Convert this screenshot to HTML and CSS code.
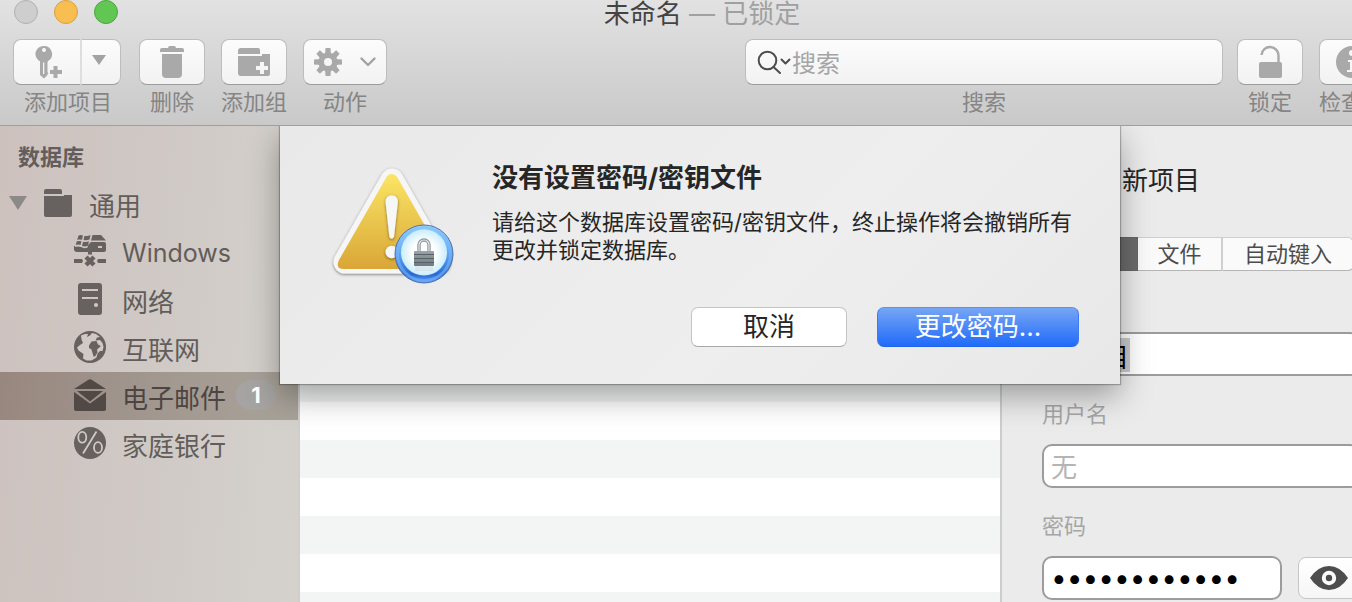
FILE: index.html
```html
<!DOCTYPE html>
<html lang="zh-CN">
<head>
<meta charset="utf-8">
<title>未命名 — 已锁定</title>
<link rel="stylesheet" href="styles.css">
</head>
<body>
<div class="window">
  <header class="header">
    <div class="titlebar">
      <div class="lights">
        <button class="light light-off" type="button"></button>
        <button class="light light-min" type="button"></button>
        <button class="light light-max" type="button"></button>
      </div>
      <h1 class="title">未命名 <span class="title-state">— 已锁定</span></h1>
    </div>
    <div class="toolbar">
      <div class="tool">
        <div class="tool-split">
          <button class="tool-button split-main" type="button" aria-labelledby="t-add">
            <svg width="28" height="34" viewBox="0 0 28 34" fill="#a9a9a9">
              <path fill-rule="evenodd" d="M9 1a8 8 0 0 1 4.400 14.700L12.500 17v10.200l1 .8-1 1.200v.8L9 33.500 5 30V16.200A8 8 0 0 1 9 1Zm0 2a2 2 0 1 0 0 4 2 2 0 0 0 0-4ZM8 17.500V29h1.300V17.500Z"/>
              <path d="M18.500 21h4v4h4.500v4h-4.500v4h-4v-4H15v-4h3.500Z"/>
            </svg>
          </button>
          <button class="tool-button split-menu" type="button" aria-labelledby="t-add">
            <svg width="14" height="10" viewBox="0 0 14 10" fill="#a2a2a2"><path d="M0 0h14L7 10Z"/></svg>
          </button>
        </div>
        <span class="tool-label" id="t-add">添加项目</span>
      </div>
      <div class="tool">
        <button class="tool-button" type="button" aria-labelledby="t-del">
          <svg width="24" height="34" viewBox="0 0 24 34" fill="#a9a9a9">
            <path d="M0 7V5q0-2 2-2h6q0-2 2-2h4q2 0 2 2h6q2 0 2 2v2ZM2 9h20v20q0 4-4 4H6q-4 0-4-4Z"/>
          </svg>
        </button>
        <span class="tool-label" id="t-del">删除</span>
      </div>
      <div class="tool">
        <button class="tool-button" type="button" aria-labelledby="t-group">
          <svg width="32" height="28" viewBox="0 0 32 28" fill="#a9a9a9">
            <path d="M0 6V3q0-3 3-3h17q2 0 2 2v4Z"/>
            <path fill-rule="evenodd" d="M0 8h24V6h8v20q0 2-2 2H3q-3 0-3-3Zm22 6v4h-4v4h4v4h4v-4h4v-4h-4v-4Z"/>
          </svg>
        </button>
        <span class="tool-label" id="t-group">添加组</span>
      </div>
      <div class="tool">
        <button class="tool-button tool-action" type="button" aria-labelledby="t-action">
          <svg width="28" height="28" viewBox="-14 -14 28 28" fill="#a9a9a9">
            <path d="M-2.500-14h5L3-7h-6ZM-2.500 14h5L3 7h-6ZM-14-2.500v5L-7 3v-6ZM14-2.500v5L7 3v-6Z"/>
            <path transform="rotate(45)" d="M-2.500-14h5L3-7h-6ZM-2.500 14h5L3 7h-6ZM-14-2.500v5L-7 3v-6ZM14-2.500v5L7 3v-6Z"/>
            <circle r="6.800" fill="none" stroke="#a9a9a9" stroke-width="5.600"/>
          </svg>
          <svg width="16" height="10" viewBox="0 0 16 10" fill="none" stroke="#a2a2a2" stroke-width="2.400" stroke-linecap="round" stroke-linejoin="round"><path d="M1.500 1.500l6.500 6.500 6.500-6.500"/></svg>
        </button>
        <span class="tool-label" id="t-action">动作</span>
      </div>
      <div class="tool tool-search">
        <div class="search-box">
          <svg width="34" height="24" viewBox="0 0 34 24" fill="none" stroke="#4d4d4d" stroke-width="2" stroke-linecap="round" stroke-linejoin="round">
            <circle cx="10.500" cy="10.500" r="8.800"/><path d="M16.500 17l6.500 6"/><path d="M24.500 9.500l4 4 4-4"/>
          </svg>
          <input class="search-input" id="search" type="text" placeholder="搜索">
        </div>
        <label class="tool-label" for="search">搜索</label>
      </div>
      <div class="tool">
        <button class="tool-button" type="button" aria-labelledby="t-lock">
          <svg width="24" height="34" viewBox="0 0 24 34" fill="#a9a9a9">
            <path d="M3.500 10a8 8 0 0 1 17 1v8" fill="none" stroke="#a9a9a9" stroke-width="2.400"/>
            <rect x="1" y="17" width="23" height="16" rx="2"/>
          </svg>
        </button>
        <span class="tool-label" id="t-lock">锁定</span>
      </div>
      <div class="tool">
        <button class="tool-button" type="button" aria-labelledby="t-info">
          <svg width="32" height="32" viewBox="0 0 32 32">
            <circle cx="16" cy="16" r="16" fill="#a9a9a9"/>
            <circle cx="16" cy="7" r="3" fill="#f7f7f7"/>
            <path d="M12 14h7v10h2v2H11v-2h3v-8h-2Z" fill="#f7f7f7"/>
          </svg>
        </button>
        <span class="tool-label" id="t-info">检查器</span>
      </div>
    </div>
  </header>

  <main class="content">
    <nav class="sidebar">
      <h2 class="side-title">数据库</h2>
      <a class="side-row side-root" href="#">
        <svg width="18" height="14" viewBox="0 0 18 14" fill="#8b8a88"><path d="M0 0h18L9 14Z"/></svg>
        <svg class="root-icon" width="28" height="28" viewBox="0 0 28 28" fill="#67625f"><path d="M0 5V2q0-2 2-2h14q2 0 2 2v3ZM0 7h20V6h8v20q0 2-2 2H2q-2 0-2-2Z"/></svg>
        <span>通用</span>
      </a>
      <a class="side-row" href="#">
        <svg width="32" height="32" viewBox="0 0 32 32" fill="#67625f">
          <path d="M18.500 0H27l5 5.500H17ZM0 11h13l4-4h13q2 0 2 2v6q0 2-2 2H18v2.500h-4V17H3q-3 0-3-3Zm24 0v2h4v-2Z" fill-rule="evenodd"/>
          <path d="M4 0h13l-3.500 12.500q-3 1.500-6.500-.5-3-1-6 0Z" fill="#d0c9c6"/>
          <path d="M4.500.5q2-.8 4.500 0L8 4.800q-2.500-.8-4.800 0ZM10.500.8q3 .8 6-.8L15.500 4.600q-3 1.200-6 .5ZM2.800 6.300q2.200-.8 4.700 0L6.500 10q-2.500-.8-4.800 0ZM9 6.700q3 .8 6-.5L14 10.700q-3 1.300-6 .3Z"/>
          <path d="M0 24h8l1 2-1 2H0ZM32 24h-8l-1 2 1 2h8Z"/>
          <path d="M12 22l8 8M20 22l-8 8" fill="none" stroke="#67625f" stroke-width="4.400"/>
        </svg>
        <span class="latin">Windows</span>
      </a>
      <a class="side-row" href="#">
        <svg width="32" height="32" viewBox="0 0 32 32" fill="#67625f">
          <path fill-rule="evenodd" d="M7 0h18q3 0 3 3v26q0 3-3 3H7q-3 0-3-3V3q0-3 3-3Zm1 6v2h16V6Zm0 8v2h16v-2Z"/>
          <circle cx="22" cy="22" r="2" fill="#d0c9c6"/>
        </svg>
        <span>网络</span>
      </a>
      <a class="side-row" href="#">
        <svg width="32" height="32" viewBox="0 0 32 32">
          <circle cx="16" cy="16" r="16" fill="#67625f"/>
          <path fill="#d0c9c6" d="M7 4.500l4-1.500 3 0-1 3 3-1.500 2-2.500 4 1 4 3-3 .5-1.500 3 4.500-.5 2.500 3 1 4-1 4-2.500 0-2.500 2.500-1 4-5 3h-5l-3.500-2 .5-4.500-5-3.500-1.500-3 3-2.500 3-2-1.500-3.500Z"/>
          <path fill="#67625f" d="M15 14.500l2.500-4 5-.5 1.500 3.500 3 1.500-4 3.500.5 3-2.500 4h-1.500l-2-7-2.500-1.500Z"/>
        </svg>
        <span>互联网</span>
      </a>
      <a class="side-row side-selected" href="#" aria-current="page">
        <svg width="32" height="32" viewBox="0 0 32 32" fill="#514945">
          <path d="M14 1q2-1.500 4 0l14 9H0ZM3 12h26l-13 10.500ZM0 13l16 11.500L32 13v17q0 2-2 2H2q-2 0-2-2Z"/>
        </svg>
        <span>电子邮件</span>
        <span class="badge">1</span>
      </a>
      <a class="side-row" href="#">
        <svg width="32" height="32" viewBox="0 0 32 32">
          <circle cx="16" cy="16" r="16" fill="#67625f"/>
          <g fill="none" stroke="#d0c9c6" stroke-width="1.800">
            <path d="M22.500 4.500L9 26.500"/>
            <ellipse cx="8.300" cy="10.300" rx="4" ry="5.400"/>
            <ellipse cx="24" cy="20.500" rx="4" ry="5.400"/>
          </g>
        </svg>
        <span>家庭银行</span>
      </a>
    </nav>

    <section class="list">
      <div class="list-head"></div>
      <div class="list-rows"></div>
    </section>

    <section class="detail">
      <h2 class="detail-title">新项目</h2>
      <div class="tabs">
        <button class="tab tab-on" type="button"></button>
        <button class="tab" type="button">文件</button>
        <button class="tab tab-wide" type="button">自动键入</button>
      </div>
      <div class="fields">
        <input class="field field-title" type="text" value="新项目">
        <label class="field-label" for="user">用户名</label>
        <input class="field" id="user" type="text" placeholder="无">
        <label class="field-label" for="pass">密码</label>
        <div class="pass-row">
          <input class="field field-pass" id="pass" type="password" value="abcdefghijkl">
          <button class="eye" type="button">
            <svg width="38" height="24" viewBox="0 0 38 24"><path d="M0 12Q8 0 19 0t19 12Q30 24 19 24T0 12Z" fill="#4d4d4d"/><circle cx="19" cy="12" r="5.200" fill="#4d4d4d" stroke="#fbfbfb" stroke-width="4"/></svg>
          </button>
        </div>
      </div>
    </section>

    <div class="dialog" role="alertdialog" aria-labelledby="d-title" aria-describedby="d-text">
      <svg class="alert-icon" width="126" height="122" viewBox="0 0 126 122">
        <defs>
          <linearGradient id="gold" x1="0" y1="0" x2="0" y2="1"><stop offset="0" stop-color="#fbe565"/><stop offset="1" stop-color="#d9a637"/></linearGradient>
          <linearGradient id="ring" x1="0" y1="0" x2="0" y2="1"><stop offset="0" stop-color="#a9dcfb"/><stop offset=".5" stop-color="#5da5f5"/><stop offset=".85" stop-color="#2a68d4"/><stop offset="1" stop-color="#5f9dfa"/></linearGradient>
          <radialGradient id="glass"><stop offset=".5" stop-color="#fff"/><stop offset="1" stop-color="#c9edfc"/></radialGradient>
          <linearGradient id="steel" x1="0" y1="0" x2="0" y2="1"><stop offset="0" stop-color="#9aa4a9"/><stop offset="1" stop-color="#6d797f"/></linearGradient>
          <filter id="drop" x="-20%" y="-20%" width="140%" height="140%"><feDropShadow dx="0" dy="1" stdDeviation="1.500" flood-opacity=".5"/></filter>
        </defs>
        <path d="M62 16L109 98H15Z" fill="#f6f6f6" stroke="#f6f6f6" stroke-width="23" stroke-linejoin="round" filter="url(#drop)"/>
        <path d="M61.700 10q3.500 0 6 4l47 82q4 9-5 9H14q-9 0-5-9L56 14q2-4 5.700-4Z" fill="url(#gold)"/>
        <g fill="#f7f7f7" filter="url(#drop)">
          <path d="M55.500 37.500a6.200 6.200 0 0 1 12.400 0L64 73q-2.300 3.500-4.600 0Z"/>
          <circle cx="61.700" cy="88" r="6.200"/>
        </g>
        <circle cx="94" cy="90" r="29" fill="url(#ring)" stroke="#4a6fa8" stroke-width="1"/>
        <circle cx="94" cy="90" r="26.500" fill="none" stroke="#78b8fa" stroke-width="3" opacity=".6"/>
        <circle cx="94" cy="88.500" r="23" fill="url(#glass)"/>
        <path d="M89 87v-6a5 5 0 0 1 10 0v6" fill="none" stroke="#8d9599" stroke-width="3.400"/>
        <path d="M89 87v-6a5 5 0 0 1 10 0v6" fill="none" stroke="#e4e7e8" stroke-width="1.200"/>
        <rect x="84" y="87" width="20" height="15" rx="1" fill="url(#steel)"/>
        <path d="M84 90.500h20M84 94.500h20M84 98.500h20" stroke="#566167" stroke-width="1"/>
        <path d="M85 102h18v5H85Z" fill="#b8c4ca" opacity=".3"/>
      </svg>
      <div class="dialog-body">
        <h2 class="dialog-title" id="d-title">没有设置密码/密钥文件</h2>
        <p class="dialog-text" id="d-text">请给这个数据库设置密码/密钥文件，终止操作将会撤销所有更改并锁定数据库。</p>
        <div class="dialog-actions">
          <button class="push" type="button">取消</button>
          <button class="push push-default" type="button">更改密码...</button>
        </div>
      </div>
    </div>
  </main>
</div>
</body>
</html>
```

FILE: styles.css
```css
* { box-sizing: border-box; }

body {
  margin: 0;
  overflow: hidden;
  font-family: Inter, "Noto Sans CJK SC", sans-serif;
  font-size: 26px;
  color: #262626;
}

button, input { font: inherit; color: inherit; margin: 0; }
button { padding: 0; border: 0; }
h1, h2, p { margin: 0; }
svg { display: block; flex: none; }

/* The window runs past the right edge of the viewport. */
.window {
  display: flex;
  flex-direction: column;
  width: calc(100% + 48px);
  height: 100vh;
}

.header {
  flex: none;
  height: 126px;
  background: linear-gradient(#e2e2e2, #c9c9c9);
  border-bottom: 1px solid #9f9f9f;
}

.titlebar {
  display: grid;
  grid-template-columns: 1fr auto 1fr;
  align-items: start;
  height: 27px;
}
.lights { display: flex; gap: 16px; padding-left: 14px; }
.light { width: 24px; height: 24px; border-radius: 50%; border: 1px solid; }
.light-off { background: #cecece; border-color: #b0b0b0; }
.light-min { background: #f8be4f; border-color: #dd9f3a; }
.light-max { background: #61c654; border-color: #4aa73c; }
.title { font-size: 26px; font-weight: 400; line-height: 27px; color: #434343; padding-left: 4px; white-space: nowrap; }
.title-state { color: #a0a0a0; }

.toolbar {
  display: flex;
  gap: 16px;
  padding: 12px 15px 0 13px;
}
.tool { display: flex; flex-direction: column; align-items: center; flex: none; gap: 4px; }
.tool-label { font-size: 22px; line-height: 26px; color: #858585; white-space: nowrap; }
.tool-button, .search-box {
  display: flex;
  align-items: center;
  justify-content: center;
  width: 66px;
  height: 46px;
  background: linear-gradient(#fcfcfc, #f2f2f2);
  border: 1px solid #bdbdbd;
  border-bottom-color: #9c9c9c;
  border-radius: 8px;
}
.tool-split { display: flex; margin-right: 2px; }
.split-main { width: 68px; border-radius: 8px 0 0 8px; border-right: 1px solid #dedede; padding-left: 4px; }
.split-menu { width: 40px; border-radius: 0 8px 8px 0; border-left: 1px solid #dedede; padding: 0 4px 4px 0; }
.tool-action { width: 84px; gap: 18px; }
.tool-search { flex: 1; max-width: 478px; margin-left: auto; align-items: stretch; margin-right: -2px; }
.tool-search .tool-label { text-align: center; }
.search-box { width: 100%; justify-content: flex-start; padding-left: 11px; gap: 1px; }
.search-input { flex: 1; min-width: 0; height: 42px; padding: 2px 0 0; border: 0; outline: 0; background: none; font-size: 24px; }
.search-input::placeholder { color: #a5a5a5; }

.content { position: relative; display: flex; flex: 1; min-height: 0; overflow: hidden; }

.sidebar {
  width: 300px;
  flex: none;
  padding-top: 6px;
  background: linear-gradient(95deg, #cdc1be, #cfc8c4 45%, #d5d2ce);
  border-right: 2px solid #cfcecd;
}
.side-title { padding-left: 18px; font-size: 22px; line-height: 50px; margin-bottom: -2px; font-weight: 700; color: #635e5b; }
.side-row {
  display: flex;
  align-items: center;
  gap: 16px;
  height: 48px;
  padding: 0 0 2px 74px;
  color: #625d5a;
  text-decoration: none;
  white-space: nowrap;
}
.side-row span { padding-top: 2px; }
.side-row .latin { font-size: 25px; padding-top: 4px; }
.side-root { padding-left: 9px; }
.side-root { gap: 17px; }
.side-selected { color: #4d4541; background: linear-gradient(95deg, #98877f, #a1978f 50%, #a9a39a); }
.side-row .badge {
  width: 40px;
  margin-left: -6px;
  padding: 0;
  border-radius: 15px;
  background: #a5a4a3;
  color: #fff;
  font-size: 22px;
  font-weight: 700;
  line-height: 30px;
  text-align: center;
}

.list { flex: 1; display: flex; flex-direction: column; min-width: 0; background: #fff; }
.list-head { height: 48px; background: #f5f5f5; }
.list-rows { flex: 1; background: repeating-linear-gradient(#fff 0 38px, #f3f5f4 38px 76px); }

.detail {
  width: 400px;
  flex: none;
  padding: 37px 40px 0;
  background: #ebebeb;
  border-left: 2px solid #cdcdcd;
}
.detail-title { padding-left: 80px; font-size: 26px; font-weight: 400; line-height: 36px; }
.tabs { display: flex; width: 304px; margin: 38px 8px 0; }
.tab {
  width: 84px;
  height: 34px;
  font-size: 22px;
  line-height: 30px;
  color: #4c4c4c;
  background: #fafafa;
  border: 1px solid #cfcfcf;
  border-bottom-color: #b5b5b5;
  border-left: 0;
}
.tab-on { width: 88px; background: #6c6c6c; border-color: #666; border-radius: 6px 0 0 6px; }
.tab-wide { flex: 1; border-left: 1px solid #cfcfcf; border-radius: 0 6px 6px 0; }

.fields { display: flex; flex-direction: column; margin-top: 61px; }
.field {
  width: 100%;
  height: 44px;
  padding: 2px 7px 0;
  border: 2px solid #9c9c9c;
  border-radius: 10px;
  outline: 0;
  background: #fff;
  color: #000;
}
.field::placeholder { color: #b5b5b5; }
.field-title { background: linear-gradient(#cacaca, #cacaca) 7px 4px / 79px 34px no-repeat #fff; }
.field-label { padding: 22px 0 14px; font-size: 22px; line-height: 32px; color: #a6a6a6; }
.pass-row { display: flex; align-items: center; gap: 16px; }
.field-pass { width: 240px; flex: none; font-size: 28px; padding-top: 0; }
.eye {
  flex: 1;
  display: flex;
  justify-content: center;
  align-items: center;
  height: 42px;
  border: 1px solid #c6c6c6;
  border-radius: 8px;
  background: linear-gradient(#fff, #f6f6f6);
}

.dialog {
  position: absolute;
  top: 0;
  left: 50%;
  width: 840px;
  margin-left: -420px;
  display: flex;
  gap: 36px;
  padding: 36px 34px 37px 50px;
  background: linear-gradient(135deg, #e9e9e9, #eeeeee 60%, #e8e8e8);
  box-shadow: 0 0 1px 1px rgba(0, 0, 0, .25), 0 12px 30px rgba(0, 0, 0, .34);
}
.alert-icon { margin-top: 2px; }
.dialog-body { flex: 1; }
.dialog-title { font-size: 26px; line-height: 32px; font-weight: 700; }
.dialog-text { margin-top: 14px; font-size: 22px; line-height: 28px; }
.dialog-actions { display: flex; justify-content: flex-end; gap: 30px; margin: 43px 7px 0 0; }
.push {
  width: 156px;
  height: 40px;
  line-height: 36px;
  border: 1px solid #c4c4c4;
  border-bottom-color: #a8a8a8;
  border-radius: 7px;
  background: #fff;
}
.push-default {
  width: 202px;
  border-color: #5c92ee #3c7bf0 #1f63ee;
  background: linear-gradient(#77a5f5, #206bf9);
  color: #fff;
}
```
